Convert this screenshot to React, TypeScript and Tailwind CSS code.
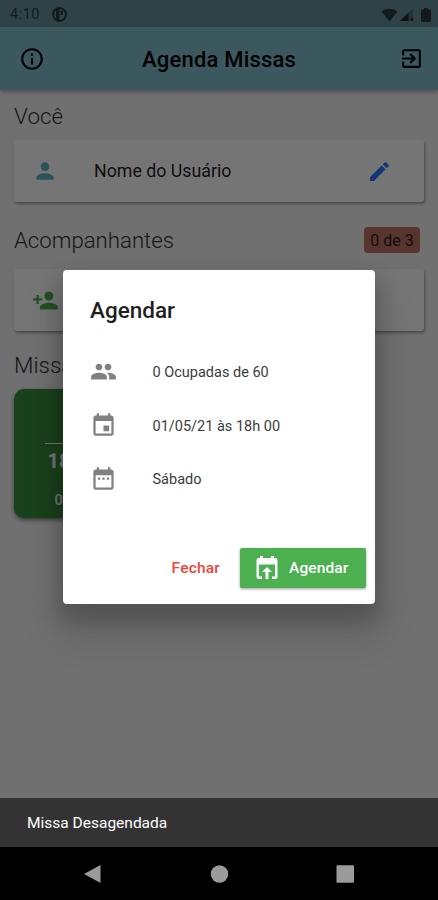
import type { ReactNode } from 'react';
import {
  MdDateRange,
  MdEdit,
  MdEvent,
  MdExitToApp,
  MdInfoOutline,
  MdPeople,
  MdPerson,
  MdPersonAdd,
} from 'react-icons/md';

const details = [
  { icon: MdPeople, text: '0 Ocupadas de 60' },
  { icon: MdEvent, text: '01/05/21 às 18h 00' },
  { icon: MdDateRange, text: 'Sábado' },
];

function StatusBar() {
  return (
    <div className="flex h-[27px] items-center bg-[#64909b] pl-[10px] pr-[7px] pt-[2px] text-black/60">
      <span className="pt-px text-[14.5px] leading-none tracking-[0.5px]">4:10</span>
      <svg className="ml-[12px]" width="15" height="15" viewBox="0 0 15 15">
        <circle cx="7.5" cy="7.5" r="6.4" fill="none" stroke="currentColor" strokeWidth="2" />
        <path d="M4 2h3.500v11H6a5 5 0 0 1-2-2zM8.500 4H11v4H8.500z" fill="currentColor" />
      </svg>
      <div className="ml-auto flex items-center">
        <svg width="17" height="14" viewBox="0 0 17 14" fill="currentColor">
          <path d="M.5 3.500C5-.2 12-.2 16.500 3.500L8.500 13.500z" />
        </svg>
        <svg className="ml-[2px]" width="13" height="13" viewBox="0 0 13 13" fill="currentColor">
          <path d="M13 0v13H0z" opacity=".35" />
          <path d="M8.500 4.500V13H0z" />
          <path d="M11 10h2v3h-2z" />
        </svg>
        <svg className="ml-[8px]" width="10" height="14" viewBox="0 0 10 14" fill="currentColor">
          <path d="M3 0h4v1.500h2a1 1 0 0 1 1 1V13a1 1 0 0 1-1 1H1a1 1 0 0 1-1-1V2.500a1 1 0 0 1 1-1h2z" />
        </svg>
      </div>
    </div>
  );
}

function AppBar() {
  return (
    <header className="flex h-[63px] items-center bg-[#80c0cf] pl-[19px] pr-[14px] text-black shadow-[0_2px_4px_rgba(0,0,0,0.3)]">
      <MdInfoOutline size={26} />
      <h1 className="ml-[97px] pt-[2px] text-[22px] font-medium leading-none tracking-[0.2px]">Agenda Missas</h1>
      <MdExitToApp size={25} className="ml-auto" />
    </header>
  );
}

function Card({ children }: { children: ReactNode }) {
  return (
    <div className="flex h-[62px] items-center rounded-[3px] bg-white px-[18px] shadow-[1px_2px_3px_rgba(0,0,0,0.35)]">
      {children}
    </div>
  );
}

function MassCard() {
  return (
    <div className="mt-[10px] flex h-[129px] w-[129px] flex-col items-center rounded-[10px] bg-[#388e3c] pt-[29px] text-white shadow-[0_2px_4px_rgba(0,0,0,0.5)]">
      <span className="text-[17px] font-medium leading-[20px]">Sáb</span>
      <div className="mt-[5px] h-px w-[68px] bg-white" />
      <span className="mt-[5px] text-[20px] font-bold leading-[24px]">18h 00</span>
      <span className="mt-[18px] text-[14.5px] font-medium leading-[20px]">0 de 60</span>
    </div>
  );
}

function CalendarUploadIcon() {
  return (
    <svg width="22" height="24" viewBox="0 0 22 24" fill="currentColor">
      <path d="M4 0h3v2h8V0h3v2h1a2.500 2.500 0 0 1 2.500 2.500v16A2.500 2.500 0 0 1 19 23h-3v-2.500h3V8.500H3v12h3V23H3A2.500 2.500 0 0 1 .5 20.500v-16A2.500 2.500 0 0 1 3 2h1z" />
      <path d="M11 11l5 5h-3.500v7h-3v-7H6z" />
    </svg>
  );
}

function Dialog() {
  return (
    <div className="flex h-[334px] w-[312px] flex-col rounded-[4px] bg-white pl-[27px] pr-[9px] pt-[26px] shadow-[0_12px_18px_6px_rgba(0,0,0,0.15),0_26px_40px_4px_rgba(0,0,0,0.14)]">
      <h2 className="pt-px text-[22.5px] font-medium leading-[27px] text-[#1f1f1f]">Agendar</h2>
      <ul className="mt-[21px]">
        {details.map(({ icon: Icon, text }) => (
          <li key={text} className="flex h-[53.500px] items-center">
            <Icon size={27} className="text-[#808080]" />
            <span className="ml-[35.500px] pt-[3px] text-[14.5px] text-[#3c3c3c]">{text}</span>
          </li>
        ))}
      </ul>
      <div className="mt-[42px] flex items-center justify-end">
        <button className="pt-[3px] text-[15.5px] font-medium tracking-[0.2px] text-[#f44336]">Fechar</button>
        <button className="ml-[20px] flex h-[40px] w-[126px] items-center rounded-[2px] bg-[#4caf50] pl-[16px] text-white shadow-[0_1px_3px_rgba(0,0,0,0.4)]">
          <CalendarUploadIcon />
          <span className="ml-[11px] pt-[3px] text-[15.5px] font-medium tracking-[0.1px]">Agendar</span>
        </button>
      </div>
    </div>
  );
}

function SystemNav() {
  return (
    <nav className="flex h-[53px] items-center justify-center bg-black text-[#9b9b9b]">
      <svg width="272" height="20" viewBox="0 0 272 20" fill="currentColor">
        <path d="M17.500 1v18L1 10z" />
        <circle cx="136.500" cy="10" r="8.700" />
        <rect x="253.500" y="1.300" width="17.500" height="17.500" rx="1" />
      </svg>
    </nav>
  );
}

export default function App() {
  return (
    <div className="relative flex h-[900px] w-[438px] flex-col overflow-hidden bg-[#f5f5f5] font-['Roboto','Liberation_Sans',sans-serif]">
      <StatusBar />
      <AppBar />
      <main className="flex-1 px-[14px] pt-[11px]">
        <h2 className="text-[22.5px] font-light leading-[30px] text-[#333]">Você</h2>
        <div className="mt-[9px]">
          <Card>
            <MdPerson size={26} className="text-[#5fb6c3]" />
            <span className="ml-[36px] pt-px text-[17.8px] text-black/90">Nome do Usuário</span>
            <MdEdit size={25} className="ml-auto mr-[14px] text-[#2979ff]" />
          </Card>
        </div>
        <div className="mt-[23px] flex h-[30px] items-center justify-between">
          <h2 className="pt-[2px] text-[22.200px] font-light text-[#333]">Acompanhantes</h2>
          <span className="mr-[4px] flex h-[26px] w-[56px] items-center justify-center rounded-[4px] bg-[#bd7466] pt-px text-[16px] text-black/80">
            0 de 3
          </span>
        </div>
        <div className="mt-[14px]">
          <Card>
            <MdPersonAdd size={27} className="text-[#4caf50]" />
          </Card>
        </div>
        <h2 className="mt-[18px] pt-[2px] text-[22.5px] font-light leading-[28px] text-[#333]">Missas</h2>
        <MassCard />
      </main>
      <div className="absolute inset-0 flex justify-center bg-black/54 pt-[270px]">
        <Dialog />
      </div>
      <footer className="relative">
        <div className="flex h-[49px] items-center bg-[#333] pl-[27px] pt-[2px] text-[15.500px] text-white">Missa Desagendada</div>
        <SystemNav />
      </footer>
    </div>
  );
}
